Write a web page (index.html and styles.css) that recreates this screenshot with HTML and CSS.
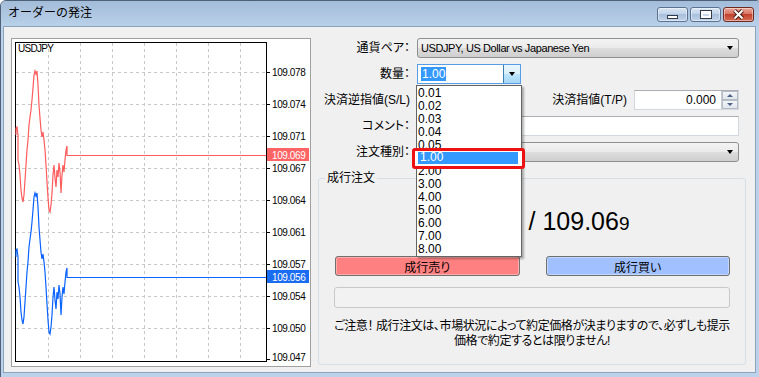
FILE: index.html
```html
<!DOCTYPE html>
<html lang="ja">
<head>
    <meta charset="UTF-8">
    <title>オーダーの発注</title>
    <link rel="stylesheet" href="styles.css">
</head>
<body>
    <div class="window">
        <div class="titlebar">
            <span class="title">オーダーの発注</span>
            <div class="caption-buttons">
                <span class="cbtn"><span class="glyph-min"></span></span>
                <span class="cbtn"><span class="glyph-max"></span></span>
                <span class="cbtn cbtn-close">
                    <svg width="13" height="11" viewBox="0 0 13 11">
                        <path d="M2.5 1.5L10.5 9.5M10.5 1.5L2.5 9.5" stroke="#4a1f19" stroke-width="4"/>
                        <path d="M2.5 1.5L10.5 9.5M10.5 1.5L2.5 9.5" stroke="#fff" stroke-width="2"/>
                    </svg>
                </span>
            </div>
        </div>
        <div class="frame">
            <div class="client">
                <div class="chart-panel">
                    <svg class="chart" width="298" height="327" viewBox="12 39 298 327">
                        <defs>
                            <polyline id="ticks" fill="none" points="16,135 16,128 17,127 18,135 18,160 19,165 20,175 21,190 22,198 23,202 24,195 25,180 26,165 27,150 28,140 29,125 30,117 31,110 32,100 33,88 34,75 35,71 36,74 37,71 38,85 39,105 40,118 41,130 42,137 43,132 44,140 45,150 46,165 47,182 48,198 49,210 50,212 51,205 52,193 53,175 54,165 55,178 56,187 57,170 58,177 59,163 60,172 61,193 62,175 63,165 64,172 65,160 66,150 67,146 67,155.5 266,155.5"/>
                        </defs>
                        <rect x="15.5" y="42.5" width="251" height="319" fill="#fff" stroke="#000"/>
                        <path class="grid" d="M48.5 43V361M80.5 43V361M112.5 43V361M144.5 43V361M176.5 43V361M208.5 43V361M240.5 43V361M16 72.5H266M16 104.5H266M16 136.5H266M16 168.5H266M16 200.5H266M16 232.5H266M16 264.5H266M16 296.5H266M16 328.5H266"/>
                        <path d="M266 72.5h4M266 104.5h4M266 136.5h4M266 168.5h4M266 200.5h4M266 232.5h4M266 264.5h4M266 296.5h4M266 328.5h4M266 359.5h4" stroke="#000"/>
                        <text class="sym" x="18" y="52">USDJPY</text>
                        <text x="272" y="76">109.078</text>
                        <text x="272" y="108">109.074</text>
                        <text x="272" y="140">109.071</text>
                        <text x="272" y="172">109.067</text>
                        <text x="272" y="204">109.064</text>
                        <text x="272" y="236">109.061</text>
                        <text x="272" y="268">109.057</text>
                        <text x="272" y="300">109.054</text>
                        <text x="272" y="332">109.050</text>
                        <text x="272" y="361">109.047</text>
                        <use href="#ticks" stroke="#ff5c5c" stroke-width="1.2"/>
                        <use href="#ticks" y="122" stroke="#0a62ff" stroke-width="1.2"/>
                        <rect x="267" y="148" width="42" height="13" fill="#ff6464"/>
                        <text class="tag" x="272" y="159">109.069</text>
                        <rect x="267" y="270" width="42" height="13" fill="#1a6cf0"/>
                        <text class="tag" x="272" y="281">109.056</text>
                    </svg>
                </div>

                <div class="order-panel">
                    <div class="form">
                        <span class="lbl">通貨ペア：</span>
                        <div class="select narrow-latin">USDJPY, US Dollar vs Japanese Yen<span class="arrow"></span></div>

                        <span class="lbl">数量：</span>
                        <div class="field-row">
                            <div class="combo">
                                <span class="combo-text"><span class="sel">1.00</span></span>
                                <span class="combo-btn"><span class="arrow"></span></span>
                                <div class="droplist">
                                    <div>0.01</div>
                                    <div>0.02</div>
                                    <div>0.03</div>
                                    <div>0.04</div>
                                    <div>0.05</div>
                                    <div class="marked"><span>1.00</span></div>
                                    <div>2.00</div>
                                    <div>3.00</div>
                                    <div>4.00</div>
                                    <div>5.00</div>
                                    <div>6.00</div>
                                    <div>7.00</div>
                                    <div>8.00</div>
                                </div>
                            </div>
                        </div>

                        <span class="lbl">決済逆指値(S/L)</span>
                        <div class="field-row">
                            <div class="input sl-input"></div>
                            <span class="tp-label">決済指値(T/P)</span>
                            <div class="spin">
                                <span class="spin-value">0.000</span>
                                <span class="spin-btns">
                                    <span class="spin-up"></span>
                                    <span class="spin-down"></span>
                                </span>
                            </div>
                        </div>

                        <span class="lbl">コメント：</span>
                        <div class="input"></div>

                        <span class="lbl">注文種別：</span>
                        <div class="select"><span></span><span class="arrow"></span></div>
                    </div>

                    <fieldset class="market">
                        <legend>成行注文</legend>
                        <div class="price">109.05<small>6</small> / 109.06<small>9</small></div>
                        <div class="trade-buttons">
                            <button class="trade sell">成行売り</button>
                            <button class="trade buy">成行買い</button>
                        </div>
                        <div class="status-bar"></div>
                        <p class="notice">ご注意！ 成行注文は、市場状況によって約定価格が決まりますので、必ずしも提示<br>価格で約定するとは限りません!</p>
                    </fieldset>
                </div>
            </div>
        </div>
    </div>
</body>
</html>
```

FILE: styles.css
```css
body {
    margin: 0;
    overflow: hidden;
    background: #fff;
    font-family: "Liberation Sans", "Noto Sans CJK JP", sans-serif;
    font-size: 12px;
    color: #000;
    font-feature-settings: "palt";
}

.window {
    width: 760px;
    height: 380px;
    border: 1px solid #4f6079;
    border-radius: 6px 6px 0 0;
    background: #bcd2eb;
    display: flex;
    flex-direction: column;
}

.titlebar {
    height: 25px;
    display: flex;
    justify-content: space-between;
    align-items: flex-start;
    padding: 0 7px 0 7px;
    border-radius: 5px 5px 0 0;
    background: linear-gradient(#a3bcd9, #b9d0e9);
}

.title {
    line-height: 25px;
    font-size: 12px;
    font-feature-settings: normal;
}

.caption-buttons {
    display: flex;
    gap: 2px;
    margin-top: 6px;
}

.cbtn {
    width: 29px;
    height: 13px;
    border: 1px solid #5d7291;
    border-radius: 3px;
    background: linear-gradient(#dae6f3, #bfd2e8 50%, #a9c0dc 50%, #c0d4ea);
    box-shadow: inset 0 0 0 1px rgba(255, 255, 255, 0.45);
    display: flex;
    align-items: center;
    justify-content: center;
}

.cbtn-close {
    border-color: #6e2a20;
    background: linear-gradient(#eaa898, #d66f5f 50%, #c2412e 50%, #d56c55);
}

.glyph-min {
    width: 9px;
    height: 2px;
    margin-top: 4px;
    background: #fff;
    border: 1px solid #333c4a;
}

.glyph-max {
    width: 6px;
    height: 2px;
    border: 2px solid #fff;
    border-top-width: 3px;
    background: #c9d8ea;
    box-shadow: 0 0 0 1px #333c4a;
}

.frame {
    flex: 1;
    padding: 0 5px 0 2px;
}

.client {
    height: 347px;
    box-sizing: border-box;
    border: 1px solid #8da2bd;
    background: #f0f0f0;
    padding: 11px 9px 5px 7px;
    display: flex;
    gap: 7px;
}

/* grafico */

.chart-panel {
    width: 300px;
    height: 329px;
    box-sizing: border-box;
    border: 1px solid #a0a0a0;
    background: #fff;
}

.chart {
    display: block;
}

.chart text {
    font-family: "Liberation Sans", sans-serif;
    font-size: 10px;
    letter-spacing: -0.4px;
    fill: #000;
}

.chart .sym {
    letter-spacing: -0.7px;
}

.chart .tag {
    fill: #fff;
}

.grid {
    stroke: #c8c8c8;
    stroke-dasharray: 3 3;
}

/* formulario */

.order-panel {
    flex: 1;
    display: flex;
    flex-direction: column;
}

.form {
    display: grid;
    grid-template-columns: 92px 322px;
    grid-auto-rows: 20px;
    row-gap: 6px;
    column-gap: 7px;
}

.lbl {
    text-align: right;
    line-height: 20px;
    white-space: nowrap;
}

.select {
    box-sizing: border-box;
    border: 1px solid #8e8f8f;
    border-radius: 3px;
    background: linear-gradient(#f3f3f3, #ebebeb 50%, #dddddd 50%, #cfcfcf);
    padding-left: 3px;
    display: flex;
    justify-content: space-between;
    align-items: center;
    white-space: nowrap;
}

.narrow-latin {
    font-size: 11px;
    letter-spacing: -0.4px;
}

.arrow {
    width: 0;
    height: 0;
    border-top: 4px solid #000;
    border-left: 3.5px solid transparent;
    border-right: 3.5px solid transparent;
    margin-right: 5px;
}

.field-row {
    display: flex;
    align-items: stretch;
}

.combo {
    position: relative;
    width: 104px;
    box-sizing: border-box;
    border: 1px solid #569de5;
    background: #fff;
    display: flex;
}

.combo-text {
    flex: 1;
    padding-left: 3px;
    display: flex;
    align-items: center;
}

.sel {
    background: #3399ff;
    color: #fff;
    line-height: 14px;
    padding: 0 1px;
}

.combo-btn {
    width: 16px;
    border-left: 1px solid #3c7fb1;
    background: linear-gradient(#eaf6fd, #d9f0fc 50%, #bee6fd 50%, #a7d9f5);
    display: flex;
    align-items: center;
    justify-content: center;
}

.combo-btn .arrow {
    margin-right: 0;
}

.droplist {
    position: absolute;
    z-index: 2;
    left: -2px;
    top: 20px;
    width: 106px;
    box-sizing: border-box;
    border: 1px solid #646464;
    background: #fff;
    padding: 1px 0 0 1px;
    line-height: 13px;
    box-shadow: 2px 2px 2px rgba(0, 0, 0, 0.3);
}

/* item escolhido, destacado com moldura vermelha */
.marked {
    position: relative;
    z-index: 1;
    height: 21px;
    margin: -4px -4px -4px -6px;
    box-sizing: border-box;
    border: 3px solid #ee1111;
    border-radius: 3px;
    background: #fff;
    padding: 1px 4px 2px 3px;
    display: flex;
}

.marked span {
    flex: 1;
    background: #3399ff;
    color: #fff;
    line-height: 11px;
    padding-left: 2px;
}

.input {
    box-sizing: border-box;
    border: 1px solid #d3d8de;
    border-top-color: #abadb3;
    background: #fff;
}

.sl-input {
    width: 104px;
}

.tp-label {
    flex: 1;
    text-align: right;
    padding-right: 7px;
    line-height: 20px;
    white-space: nowrap;
}

.spin {
    width: 105px;
    box-sizing: border-box;
    border: 1px solid #d3d8de;
    border-top-color: #abadb3;
    background: #fff;
    display: flex;
}

.spin-value {
    flex: 1;
    text-align: right;
    padding-right: 5px;
    line-height: 18px;
}

.spin-btns {
    width: 16px;
    display: flex;
    flex-direction: column;
    border-left: 1px solid #c5cbd2;
}

.spin-up, .spin-down {
    flex: 1;
    background: linear-gradient(#f4f6f8, #dfe5ec);
    border: 1px solid #b4bcc6;
    position: relative;
}

.spin-up::after, .spin-down::after {
    content: "";
    position: absolute;
    left: 4px;
    top: 2px;
    border-left: 3px solid transparent;
    border-right: 3px solid transparent;
}

.spin-up::after {
    border-bottom: 3px solid #4d6185;
}

.spin-down::after {
    border-top: 3px solid #4d6185;
}

/* ordem a mercado */

.market {
    flex: 1;
    margin: 8px 0 2px;
    padding: 0;
    min-inline-size: 0;
    border: 1px solid #d5dfe5;
    border-radius: 3px;
}

.market legend {
    margin-left: 6px;
    padding: 0 2px;
    line-height: 16px;
}

.price {
    margin-top: 20px;
    text-align: center;
    font-size: 25px;
    line-height: 30px;
    white-space: nowrap;
}

.price small {
    font-size: 19px;
}

.trade-buttons {
    display: flex;
    gap: 26px;
    margin: 17px 15px 0 16px;
}

.trade {
    flex: 1;
    height: 20px;
    padding: 0;
    border: 1px solid #707070;
    border-radius: 3px;
    font: inherit;
    color: #000;
    box-shadow: inset 0 0 0 1px rgba(255, 255, 255, 0.35);
}

.sell {
    background: #ff8080;
}

.buy {
    background: #a0c0ff;
}

.status-bar {
    height: 21px;
    box-sizing: border-box;
    margin: 11px 15px 0;
    border: 1px solid #c8c8c8;
    border-radius: 3px;
    background: #f2f2f2;
}

.notice {
    margin: 11px 0 0;
    text-align: center;
    line-height: 15px;
    white-space: nowrap;
    letter-spacing: -0.4px;
}
```
